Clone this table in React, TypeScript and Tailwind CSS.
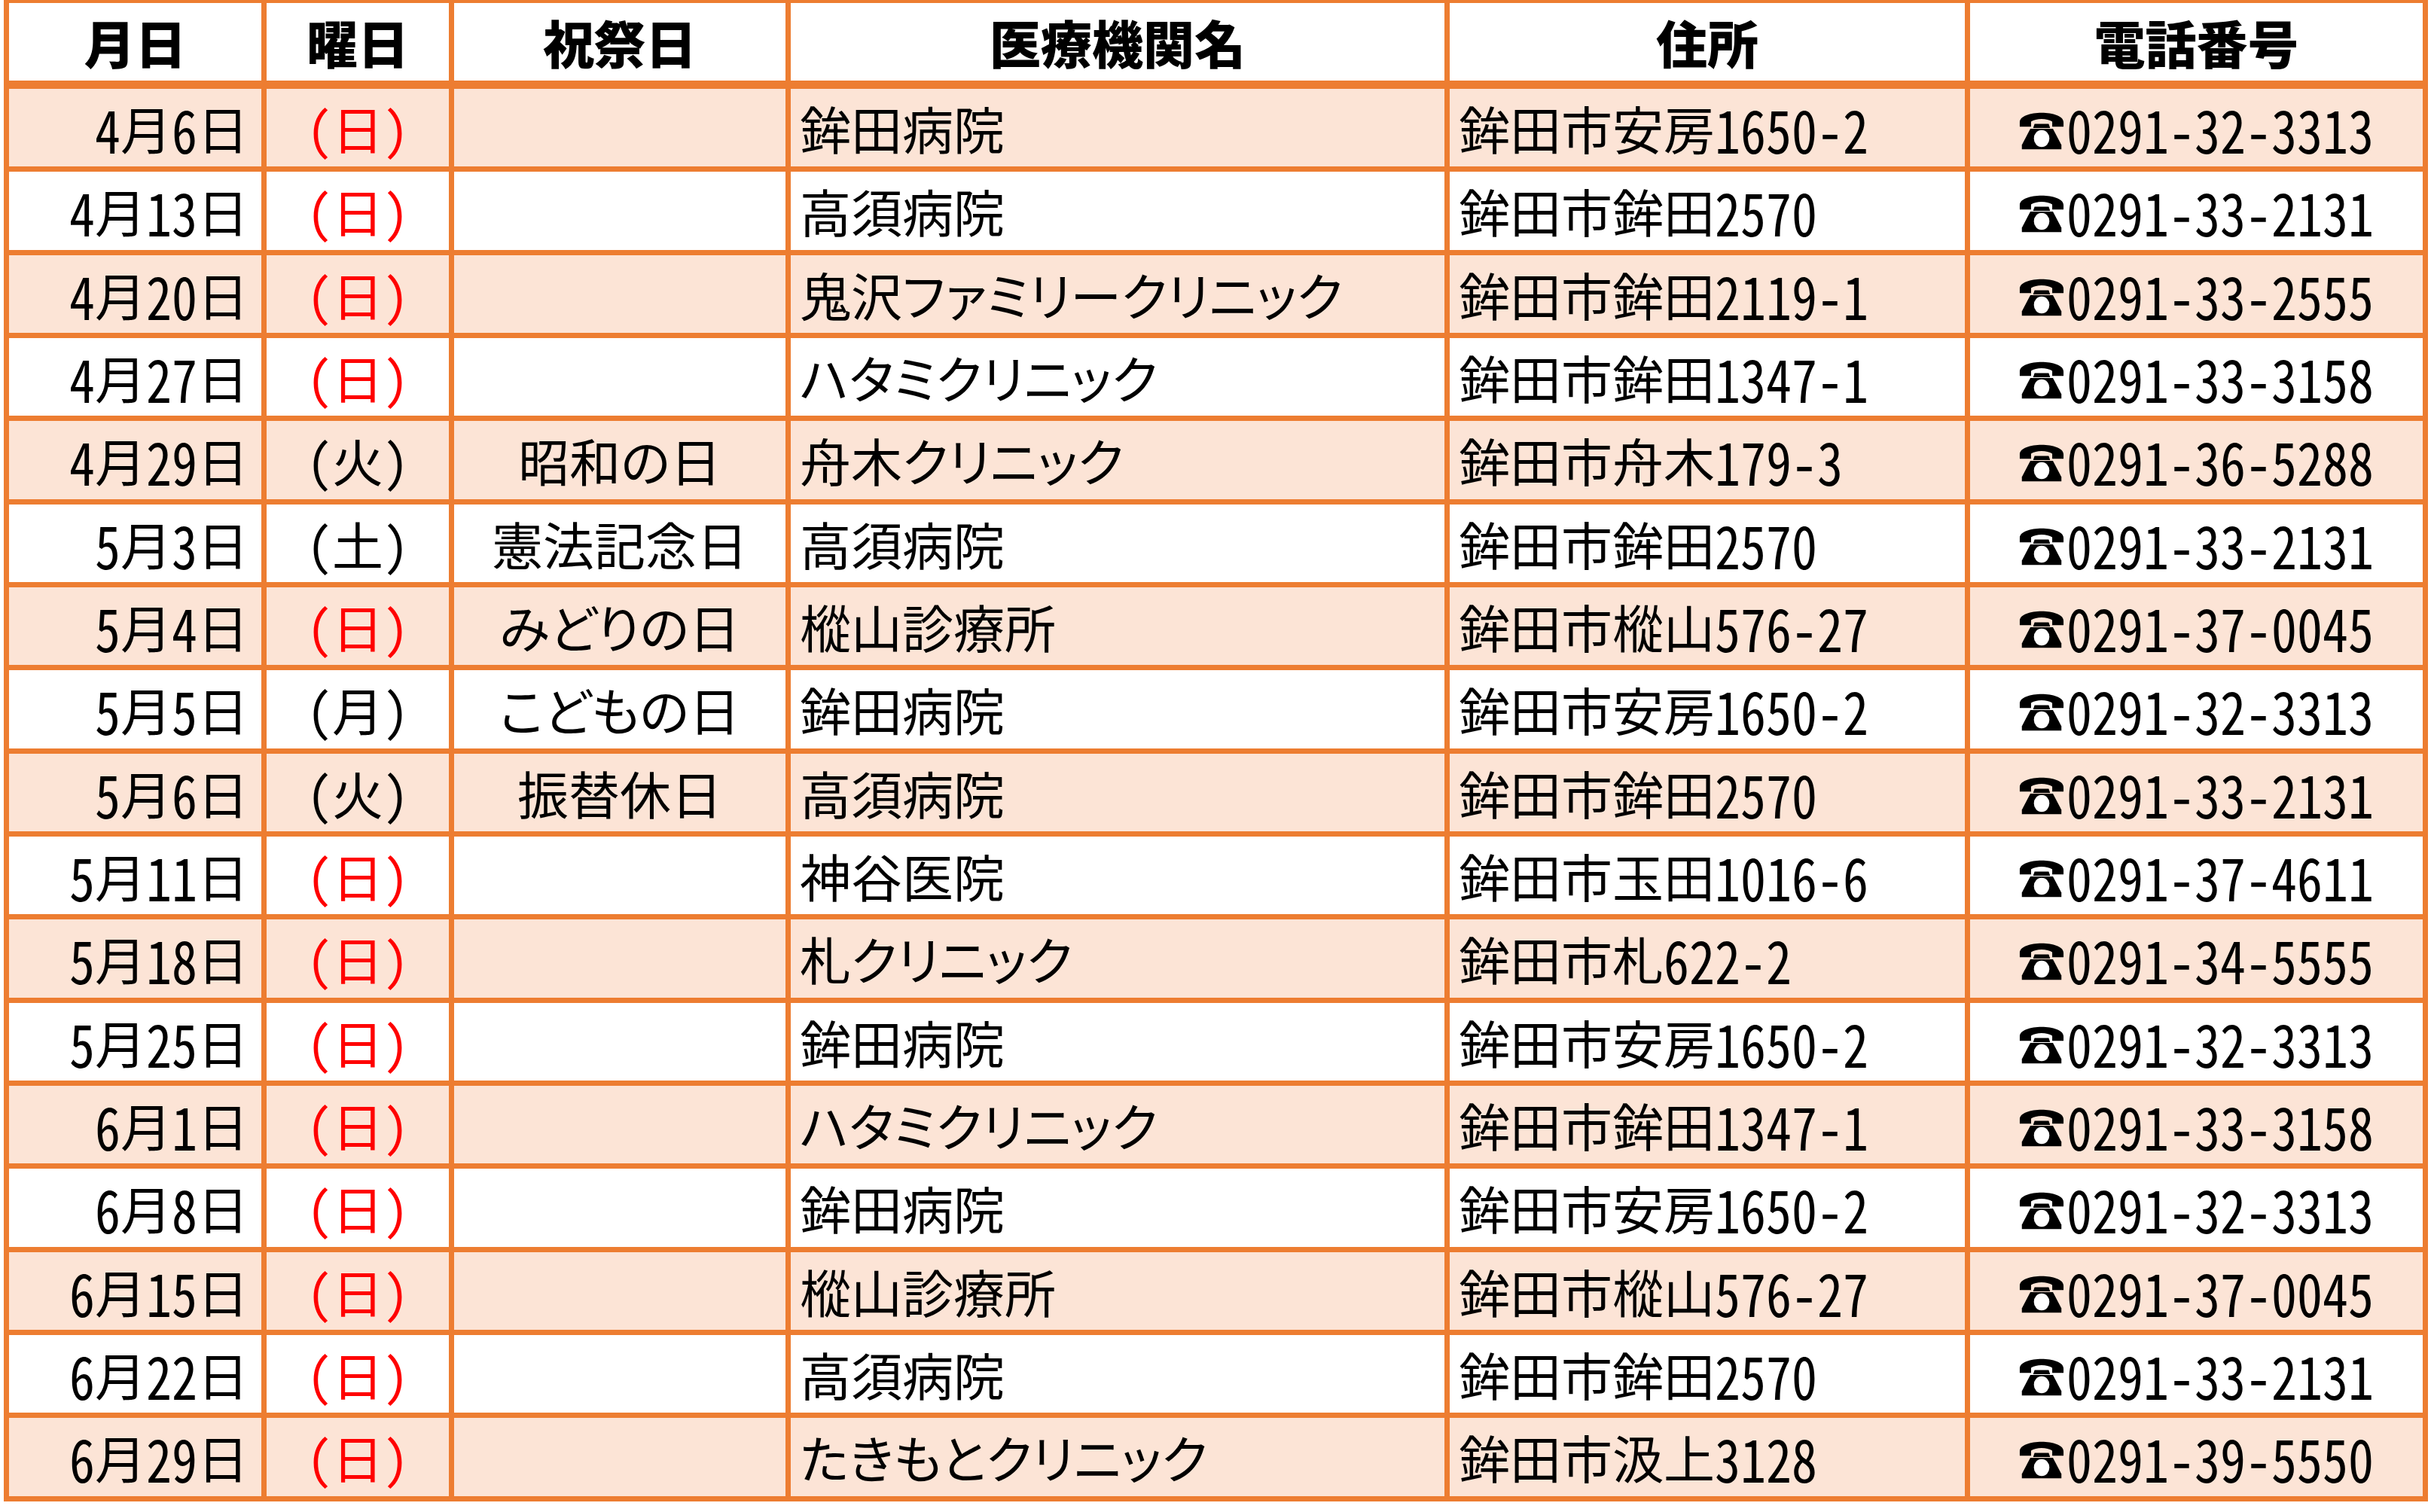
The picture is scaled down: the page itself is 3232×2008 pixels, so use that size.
import React from "react";

type Row = [string, string, string, string, string, string, string];

const rows: Row[] = [
  ["4", "6", "日", "", "鉾田病院", "鉾田市安房1650-2", "0291-32-3313"],
  ["4", "13", "日", "", "高須病院", "鉾田市鉾田2570", "0291-33-2131"],
  ["4", "20", "日", "", "鬼沢ファミリークリニック", "鉾田市鉾田2119-1", "0291-33-2555"],
  ["4", "27", "日", "", "ハタミクリニック", "鉾田市鉾田1347-1", "0291-33-3158"],
  ["4", "29", "火", "昭和の日", "舟木クリニック", "鉾田市舟木179-3", "0291-36-5288"],
  ["5", "3", "土", "憲法記念日", "高須病院", "鉾田市鉾田2570", "0291-33-2131"],
  ["5", "4", "日", "みどりの日", "樅山診療所", "鉾田市樅山576-27", "0291-37-0045"],
  ["5", "5", "月", "こどもの日", "鉾田病院", "鉾田市安房1650-2", "0291-32-3313"],
  ["5", "6", "火", "振替休日", "高須病院", "鉾田市鉾田2570", "0291-33-2131"],
  ["5", "11", "日", "", "神谷医院", "鉾田市玉田1016-6", "0291-37-4611"],
  ["5", "18", "日", "", "札クリニック", "鉾田市札622-2", "0291-34-5555"],
  ["5", "25", "日", "", "鉾田病院", "鉾田市安房1650-2", "0291-32-3313"],
  ["6", "1", "日", "", "ハタミクリニック", "鉾田市鉾田1347-1", "0291-33-3158"],
  ["6", "8", "日", "", "鉾田病院", "鉾田市安房1650-2", "0291-32-3313"],
  ["6", "15", "日", "", "樅山診療所", "鉾田市樅山576-27", "0291-37-0045"],
  ["6", "22", "日", "", "高須病院", "鉾田市鉾田2570", "0291-33-2131"],
  ["6", "29", "日", "", "たきもとクリニック", "鉾田市汲上3128", "0291-39-5550"],
];

function Txt({ s }: { s: string }) {
  const parts = s.split(/([0-9\-]+)/).filter((p) => p.length > 0);
  return (
    <>
      {parts.map((p, i) =>
        /^[0-9\-]+$/.test(p) ? (
          <span key={i} className="inline-block scale-y-[1.16]">
            {p}
          </span>
        ) : (
          <span key={i}>{p}</span>
        )
      )}
    </>
  );
}

function Phone() {
  return (
    <svg width="60" height="58" viewBox="0 0 64 60" className="shrink-0 mr-[3px]">
      <path
        d="M1 22 C1 4 63 4 63 22 L63 28 L47 28 L47 21 C40 16 24 16 17 21 L17 28 L1 28 Z"
        fill="#000"
      />
      <path d="M22 24 L42 24 L44 30 L20 30 Z" fill="#000" />
      <path d="M16 31 L48 31 L60 54 L60 60 L4 60 L4 54 Z" fill="#000" />
      <ellipse cx="32" cy="45" rx="11" ry="12" fill="#fff" />
    </svg>
  );
}

const grid = "grid grid-cols-[335px_242px_440px_868px_684px_601px] gap-x-[7px]";

export default function App() {
  return (
    <div className="w-[3232px] h-[2008px] bg-white pl-[5px] font-['Noto_Sans_CJK_JP',sans-serif] text-[68px] leading-none text-black [font-feature-settings:'palt'_1,'hwid'_1]">
      <div className="w-[3219px] bg-[#ED7D31] pt-[4px] px-[7px] pb-[7px] flex flex-col">
        <div className={grid + " h-[103px] mb-[11px] font-black"}>
          <div className="bg-white flex items-center justify-center">月日</div>
          <div className="bg-white flex items-center justify-center">曜日</div>
          <div className="bg-white flex items-center justify-center">祝祭日</div>
          <div className="bg-white flex items-center justify-center">医療機関名</div>
          <div className="bg-white flex items-center justify-center">住所</div>
          <div className="bg-white flex items-center justify-center">電話番号</div>
        </div>
        <div className="flex flex-col gap-y-[7px] font-normal">
          {rows.map((r, i) => {
            const bg = i % 2 === 0 ? "bg-[#FCE4D6]" : "bg-white";
            const red = r[2] === "日";
            const h = i % 3 === 1 ? " h-[104px]" : " h-[103px]";
            return (
              <div key={i} className={grid + h}>
                <div className={bg + " flex items-center justify-end pr-[17px]"}>
                  <Txt s={r[0] + "月" + r[1] + "日"} />
                </div>
                <div
                  className={
                    bg +
                    " flex items-center justify-center " +
                    (red ? "text-[#FF0000]" : "text-black")
                  }
                >
                  （{r[2]}）
                </div>
                <div className={bg + " flex items-center justify-center"}>{r[3]}</div>
                <div className={bg + " flex items-center pl-[12px]"}>{r[4]}</div>
                <div className={bg + " flex items-center pl-[12px]"}>
                  <Txt s={r[5]} />
                </div>
                <div className={bg + " flex items-center justify-center"}>
                  <Phone />
                  <Txt s={r[6]} />
                </div>
              </div>
            );
          })}
        </div>
      </div>
    </div>
  );
}
